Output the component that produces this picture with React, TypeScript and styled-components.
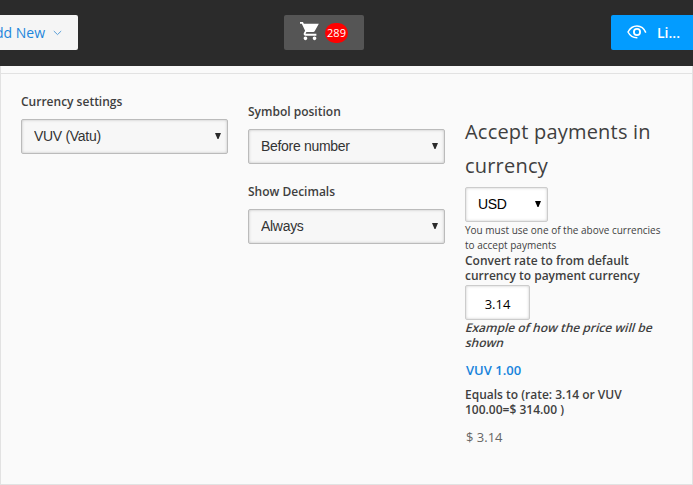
import React from "react";
import styled, { createGlobalStyle } from "styled-components";

const GlobalStyle = createGlobalStyle`
  * { box-sizing: border-box; }
  body {
    margin: 0;
    background: #fafafa;
    color: #3f3f3f;
    font-family: "Open Sans", "Noto Sans", sans-serif;
    overflow: hidden;
  }
`;

const Page = styled.div`
  width: 693px;
  height: 485px;
  display: flex;
  flex-direction: column;
  overflow: hidden;
`;

const TopBar = styled.header`
  flex: 0 0 66px;
  display: grid;
  grid-template-columns: 284px 80px 82px;
  justify-content: start;
  padding: 15px 0 16px;
  background: #2b2b2b;
`;

const BarButton = styled.button`
  height: 35px;
  margin: 0;
  border: 0;
  display: flex;
  align-items: center;
  overflow: hidden;
  white-space: nowrap;
  font-family: inherit;
`;

const AddButton = styled(BarButton)`
  width: 78px;
  padding: 0 16px 0 0;
  justify-content: flex-end;
  gap: 8px;
  border-radius: 0 2px 2px 0;
  background: #f5f5f5;
  color: #1e86dc;
  font-size: 14px;
`;

const Chevron = styled.svg`
  flex: none;
  margin-top: 1px;
`;

const CartButton = styled(BarButton)`
  padding: 0 0 0 16px;
  gap: 5px;
  border-radius: 2px;
  background: #555;
`;

const CartIcon = styled.svg`
  flex: none;
  margin-top: -2px;
`;

const Count = styled.span`
  flex: none;
  width: 23px;
  height: 20px;
  margin-top: 1px;
  border-radius: 10px;
  background: #f00;
  color: #fff;
  font-size: 11px;
  line-height: 20px;
  text-align: center;
`;

const LiveButton = styled(BarButton)`
  width: 82px;
  margin-left: 247px;
  padding: 0 0 0 16px;
  gap: 10px;
  border-radius: 2px 0 0 2px;
  background: #039cff;
  color: #fff;
  font-size: 14px;
  font-weight: 600;
`;

const EyeIcon = styled.svg`
  flex: none;
  margin-top: -2px;
`;

const Panel = styled.main`
  flex: 1;
  display: flex;
  flex-direction: column;
  border: solid #e2e2e2;
  border-width: 0 1px 1px;
`;

const PanelEdge = styled.div`
  height: 8px;
  border-bottom: 1px solid #e2e2e2;
`;

const Columns = styled.div`
  display: grid;
  grid-template-columns: 207px 197px 207px;
  column-gap: 20px;
  padding-left: 20px;
  align-items: start;
`;

const Column = styled.section<{ $top: number }>`
  display: flex;
  flex-direction: column;
  align-items: flex-start;
  padding-top: ${(p) => p.$top}px;
`;

const Field = styled.label`
  display: block;
  width: 100%;
  height: 80px;
`;

const FieldLabel = styled.span`
  display: block;
  height: 25px;
  font-size: 12px;
  font-weight: 600;
  line-height: 15px;
`;

const SelectFrame = styled.span<{ $width?: number; $plain?: boolean }>`
  display: flex;
  align-items: flex-start;
  position: relative;
  width: ${(p) => (p.$width ? `${p.$width}px` : "100%")};
  height: 35px;
  border: ${(p) => (p.$plain ? "1px solid #ccc" : "1px solid #bbb")};
  border-radius: 2px;
  box-shadow: inset 0 0 3px rgba(0, 0, 0, 0.22);
  background: ${(p) => (p.$plain ? "#fff" : "#f7f7f7")};
  color: ${(p) => (p.$plain ? "#000" : "#333")};
`;

const NativeSelect = styled.select`
  appearance: none;
  width: 100%;
  height: 31px;
  padding: 0 20px 0 12px;
  border: 0;
  outline: 0;
  background: transparent;
  color: inherit;
  font: 14px "Liberation Sans", Arial, sans-serif;
  letter-spacing: -0.3px;
`;

const Caret = styled.svg`
  position: absolute;
  right: 6px;
  top: 13px;
  pointer-events: none;
`;

const Title = styled.h2`
  margin: 0 0 4px;
  font-size: 20px;
  font-weight: 400;
  letter-spacing: 0.2px;
  line-height: 34px;
`;

const Hint = styled.small`
  font-size: 10px;
  line-height: 15px;
  margin-top: 1px;
`;

const Note = styled.p`
  margin: 0;
  font-size: 12px;
  font-weight: 600;
  line-height: 15px;
`;

const SlantedLine = styled.span`
  display: block;
  width: max-content;
  margin-left: 1px;
  transform: skewX(-16deg);
`;

const RateInput = styled.input`
  width: 65px;
  height: 35px;
  margin: 2px 0 0;
  padding: 2px 0 0;
  border: 1px solid #ccc;
  border-radius: 2px;
  outline: 0;
  box-shadow: inset 0 0 3px rgba(0, 0, 0, 0.22);
  background: #fff;
  color: #000;
  font: 13px "Open Sans", sans-serif;
  text-align: center;
`;

const Price = styled.span<{ $accent?: boolean }>`
  margin: ${(p) => (p.$accent ? "11px 0 7px 1px" : "11px 0 0 1px")};
  color: ${(p) => (p.$accent ? "#1683dc" : "#666")};
  font-size: 13px;
  font-weight: ${(p) => (p.$accent ? 600 : 400)};
  line-height: 19px;
`;

type SelectProps = { value: string; width?: number; plain?: boolean };

function Select({ value, width, plain }: SelectProps) {
  return (
    <SelectFrame $width={width} $plain={plain}>
      <NativeSelect defaultValue={value}>
        <option>{value}</option>
      </NativeSelect>
      <Caret width="6" height="7" viewBox="0 0 6 7">
        <path d="M0 0H6L3.5 6H2.5Z" fill={plain ? "#000" : "#2b2b2b"} />
      </Caret>
    </SelectFrame>
  );
}

export default function App() {
  return (
    <>
      <GlobalStyle />
      <Page>
        <TopBar>
          <AddButton>
            Add New
            <Chevron width="9" height="6" viewBox="0 0 9 6">
              <path d="M0.8 1L4.5 4.6L8.2 1" fill="none" stroke="#5b9fd8" />
            </Chevron>
          </AddButton>
          <CartButton>
            <CartIcon width="20" height="20" viewBox="1 2 22 22">
              <path
                fill="#fff"
                d="M7 18c-1.1 0-1.99.9-1.99 2S5.9 22 7 22s2-.9 2-2-.9-2-2-2zM1 2v2h2l3.6 7.59-1.35 2.45C4.52 15.37 5.48 17 7 17h12v-2H7.42c-.14 0-.25-.11-.25-.25l.9-1.75h7.45c.75 0 1.41-.41 1.75-1.03L21.7 4H5.21l-.94-2H1zm16 16c-1.1 0-1.99.9-1.99 2s.89 2 1.99 2 2-.9 2-2-.9-2-2-2z"
              />
            </CartIcon>
            <Count>289</Count>
          </CartButton>
          <LiveButton>
            <EyeIcon width="20" height="14" viewBox="0 0 20 14" fill="none" stroke="#fff">
              <path d="M18.8 7.6C17 3.2 13.8 1 10 1S3 3.2 1 7C3 10.8 6 13 10.4 12.8" strokeWidth="1.5" />
              <circle cx="10" cy="7" r="3.1" strokeWidth="1.8" />
            </EyeIcon>
            Li...
          </LiveButton>
        </TopBar>
        <Panel>
          <PanelEdge />
          <Columns>
            <Column $top={20}>
              <Field>
                <FieldLabel>Currency settings</FieldLabel>
                <Select value="VUV (Vatu)" />
              </Field>
            </Column>
            <Column $top={30}>
              <Field>
                <FieldLabel>Symbol position</FieldLabel>
                <Select value="Before number" />
              </Field>
              <Field>
                <FieldLabel>Show Decimals</FieldLabel>
                <Select value="Always" />
              </Field>
            </Column>
            <Column $top={41}>
              <Title>
                Accept payments in
                <br />
                currency
              </Title>
              <Select value="USD" width={83} plain />
              <Hint>
                You must use one of the above currencies
                <br />
                to accept payments
              </Hint>
              <Note>
                Convert rate to from default
                <br />
                currency to payment currency
              </Note>
              <RateInput defaultValue="3.14" />
              <Note>
                <SlantedLine>Example of how the price will be</SlantedLine>
                <SlantedLine>shown</SlantedLine>
              </Note>
              <Price $accent>VUV 1.00</Price>
              <Note>
                Equals to (rate: 3.14 or VUV
                <br />
                100.00=$ 314.00 )
              </Note>
              <Price>$ 3.14</Price>
            </Column>
          </Columns>
        </Panel>
      </Page>
    </>
  );
}
